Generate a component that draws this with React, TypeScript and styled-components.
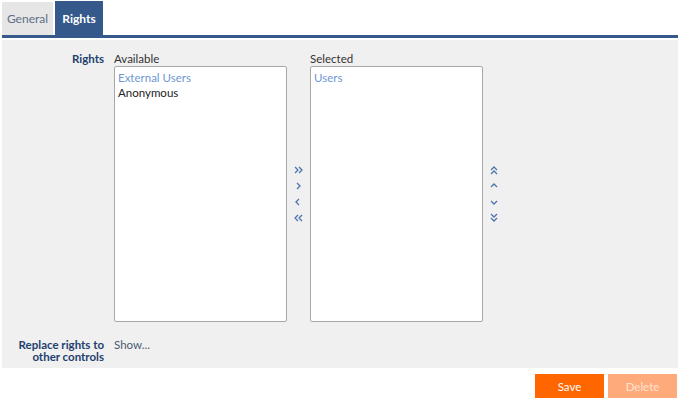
import React from 'react'
import styled, { createGlobalStyle } from 'styled-components'

const GlobalStyle = createGlobalStyle`
  html, body {
    margin: 0;
    padding: 0;
    background: #ffffff;
    font-family: Lato, "Liberation Sans", sans-serif;
    font-size: 11.5px;
  }
`

type Chevron = 'up2' | 'up' | 'down' | 'down2' | 'right2' | 'right' | 'left' | 'left2'

const paths: Record<Chevron, string> = {
  right2: 'M2 2 L5 5 L2 8 M6 2 L9 5 L6 8',
  right: 'M4 2 L7 5 L4 8',
  left: 'M6 2 L3 5 L6 8',
  left2: 'M5 2 L2 5 L5 8 M9 2 L6 5 L9 8',
  up2: 'M2 5 L5 2 L8 5 M2 9 L5 6 L8 9',
  up: 'M2 6 L5 3 L8 6',
  down: 'M2 4 L5 7 L8 4',
  down2: 'M2 1 L5 4 L8 1 M2 5 L5 8 L8 5',
}

function Arrow({ kind }: { kind: Chevron }) {
  return (
    <ArrowButton>
      <svg width="10" height="10" viewBox="0 0 10 10">
        <path d={paths[kind]} fill="none" stroke="#4d73ad" strokeWidth="1.3" />
      </svg>
    </ArrowButton>
  )
}

export default function App() {
  return (
    <>
      <GlobalStyle />
      <Page>
        <Tabs>
          <Tab width={51}>General</Tab>
          <Tab width={48} active>Rights</Tab>
        </Tabs>
        <TabLine />
        <Panel>
          <Row>
            <Label>Rights</Label>
            <Lists>
              <ListColumn>
                <Caption>Available</Caption>
                <ListBox>
                  <Item muted>External Users</Item>
                  <Item>Anonymous</Item>
                </ListBox>
              </ListColumn>
              <Arrows>
                <Arrow kind="right2" />
                <Arrow kind="right" />
                <Arrow kind="left" />
                <Arrow kind="left2" />
              </Arrows>
              <ListColumn>
                <Caption>Selected</Caption>
                <ListBox>
                  <Item muted>Users</Item>
                </ListBox>
              </ListColumn>
              <Arrows>
                <Arrow kind="up2" />
                <Arrow kind="up" />
                <Arrow kind="down" />
                <Arrow kind="down2" />
              </Arrows>
            </Lists>
          </Row>
          <ReplaceRow>
            <Label>Replace rights to<br />other controls</Label>
            <ShowLink>Show...</ShowLink>
          </ReplaceRow>
        </Panel>
        <Footer>
          <ActionButton>Save</ActionButton>
          <ActionButton disabled>Delete</ActionButton>
        </Footer>
      </Page>
    </>
  )
}

const Page = styled.div`
  width: 680px;
  height: 400px;
  padding: 1px 2px 0 2px;
  box-sizing: border-box;
  display: flex;
  flex-direction: column;
`

const Tabs = styled.div`
  display: flex;
  gap: 2px;
  height: 34px;
  align-items: flex-end;
`

const Tab = styled.div<{ active?: boolean; width: number }>`
  width: ${p => p.width}px;
  height: ${p => (p.active ? '34px' : '33px')};
  display: flex;
  align-items: center;
  justify-content: center;
  box-sizing: border-box;
  background: ${p => (p.active ? '#34598a' : '#e6e6e6')};
  color: ${p => (p.active ? '#ffffff' : '#5c6f86')};
  font-weight: ${p => (p.active ? 700 : 400)};
  font-size: 12px;
`

const TabLine = styled.div`
  height: 3px;
  background: #34598a;
  margin-bottom: 2px;
`

const Panel = styled.div`
  background: #f0f0f0;
  height: 328px;
  padding-top: 12px;
  box-sizing: border-box;
`

const Row = styled.div`
  display: flex;
`

const Label = styled.div`
  width: 102px;
  text-align: right;
  color: #1f3f6e;
  font-weight: 700;
  line-height: 12px;
  font-size: 11.5px;
  padding-top: 1px;
`

const Lists = styled.div`
  display: flex;
  margin-left: 10px;
`

const ListColumn = styled.div`
  display: flex;
  flex-direction: column;
`

const Caption = styled.div`
  color: #333333;
  line-height: 13px;
  height: 14px;
`

const ListBox = styled.div`
  width: 173px;
  height: 256px;
  box-sizing: border-box;
  background: #ffffff;
  border: 1px solid #a8a8a8;
  border-radius: 2px;
  padding: 3px 3px;
`

const Item = styled.div<{ muted?: boolean }>`
  color: ${p => (p.muted ? '#6f97d3' : '#222222')};
  line-height: 15px;
`

const Arrows = styled.div`
  width: 23px;
  display: flex;
  flex-direction: column;
  align-items: center;
  justify-content: center;
  gap: 6px;
  padding-top: 14px;
  box-sizing: border-box;
  padding-right: 2px;
`

const ArrowButton = styled.div`
  width: 10px;
  height: 10px;
  display: flex;
`

const ReplaceRow = styled.div`
  display: flex;
  margin-top: 16px;
`

const ShowLink = styled.div`
  margin-left: 10px;
  color: #4a5a70;
  line-height: 12px;
  padding-top: 1px;
`

const Footer = styled.div`
  display: flex;
  justify-content: flex-end;
  gap: 4px;
  margin-top: 6px;
  padding-right: 1px;
`

const ActionButton = styled.div<{ disabled?: boolean }>`
  width: 69px;
  height: 24px;
  display: flex;
  align-items: center;
  justify-content: center;
  background: ${p => (p.disabled ? '#ffaa7a' : '#ff6600')};
  color: ${p => (p.disabled ? '#ffe3d0' : '#ffffff')};
  font-size: 11.5px;
`
